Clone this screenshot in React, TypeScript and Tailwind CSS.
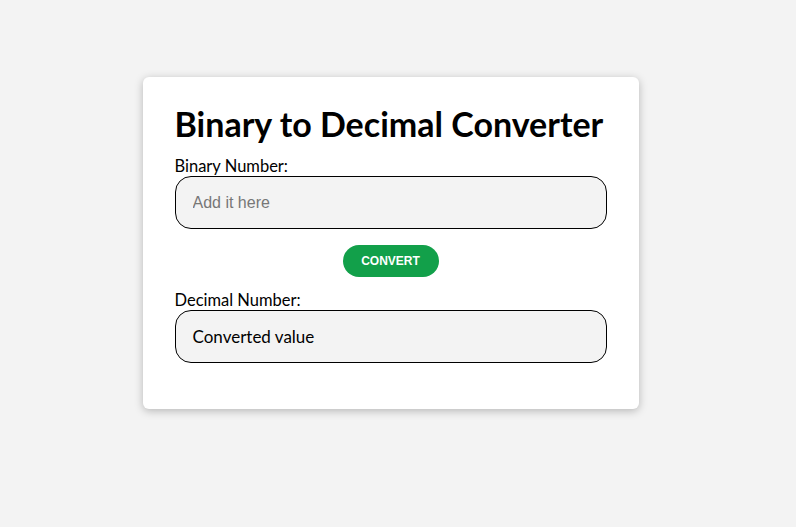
import React, { useState } from "react";

const App: React.FC = () => {
  const [binary, setBinary] = useState("");
  const [decimal, setDecimal] = useState("");

  const convert = () => {
    if (/^[01]+$/.test(binary)) setDecimal(String(parseInt(binary, 2)));
  };

  return (
    <div className="min-h-screen w-full bg-[#f3f3f3] flex justify-center pt-[77px] pr-[15px] font-['Lato',sans-serif] text-black">
      <div className="w-[496px] h-[332px] bg-white rounded-md shadow-[0_2px_8px_rgba(0,0,0,0.25)] px-[32px] pt-[27px]">
        <h1 className="text-[34px] leading-[40px] font-bold">
          Binary to Decimal Converter
        </h1>
        <label className="block text-[16.5px] leading-[18px] mt-[13px]">Binary Number:</label>
        <input
          value={binary}
          onChange={(e) => setBinary(e.target.value)}
          placeholder="Add it here"
          className="block w-full h-[53px] mt-[1px] rounded-[16px] border border-black bg-[#f3f3f3] px-[17px] text-[16px] font-['Liberation_Sans',sans-serif] placeholder:text-[#777] outline-none"
        />
        <div className="flex justify-center mt-[16px]">
          <button
            onClick={convert}
            className="w-[96px] h-[32px] rounded-full bg-[#12a04a] text-white text-[12px] font-bold font-['Liberation_Sans',sans-serif]"
          >
            CONVERT
          </button>
        </div>
        <label className="block text-[16.5px] leading-[18px] mt-[14px]">Decimal Number:</label>
        <div className="h-[53px] mt-[1px] rounded-[16px] border border-black bg-[#f3f3f3] px-[17px] flex items-center text-[17px]">
          {decimal || "Converted value"}
        </div>
      </div>
    </div>
  );
};

export default App;
